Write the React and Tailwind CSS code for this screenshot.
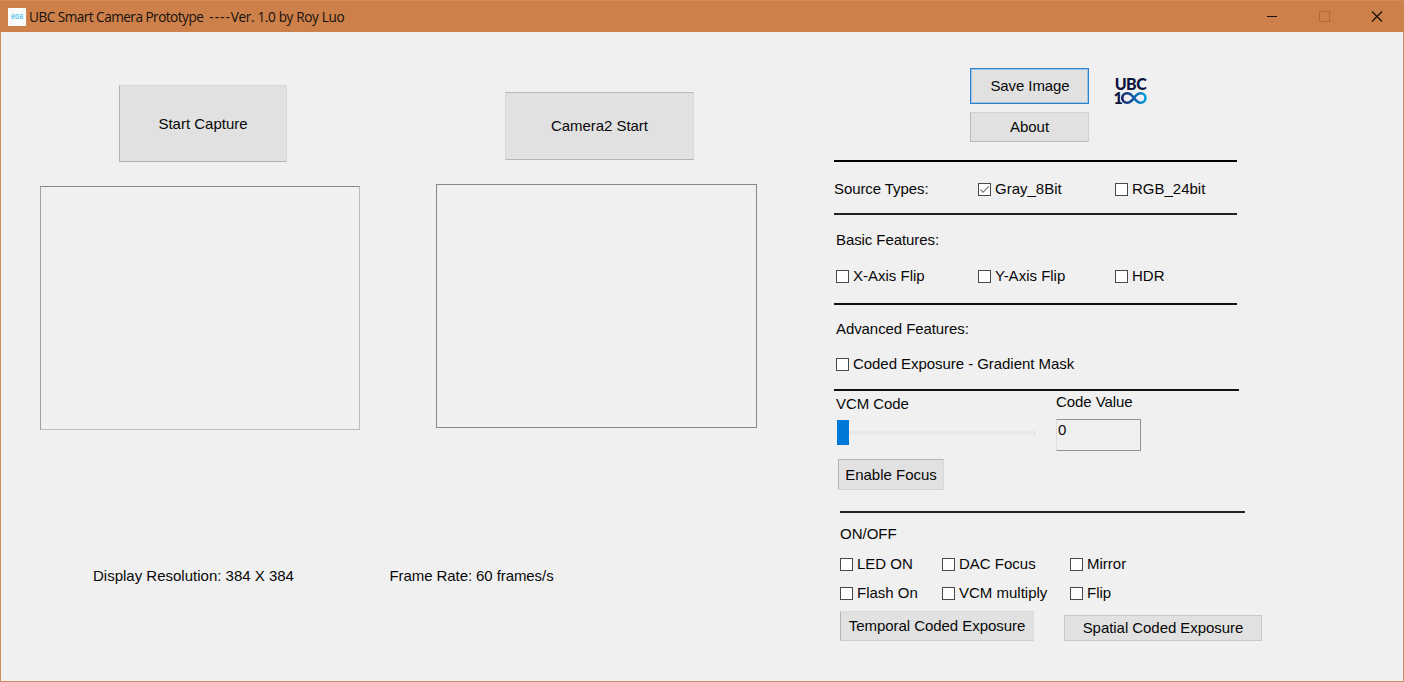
const Button = ({ className, children }) => (
  <button className={`flex shrink-0 items-center justify-center whitespace-nowrap border bg-[#e1e1e1] ${className}`}>{children}</button>
);

const Check = ({ label, checked }) => (
  <label className="flex h-[18px] items-center gap-1 whitespace-nowrap">
    <span className="flex size-[13px] shrink-0 items-center justify-center border border-[#4a4a4a] bg-white">
      {checked && (
        <svg width="11" height="11" viewBox="0 0 11 11" fill="none" stroke="#777" strokeWidth="1.1">
          <path d="M1.300 5.300 4.200 8.200 9.800 2.400" />
        </svg>
      )}
    </span>
    <span className="leading-[18px]">{label}</span>
  </label>
);

const Logo = () => (
  <svg className="overflow-visible" width="36" height="30" viewBox="0 0 36 30">
    <defs>
      <linearGradient id="inf" gradientUnits="userSpaceOnUse" x1="7" y1="0" x2="33" y2="0">
        <stop offset="0" stopColor="#1c1c5e" />
        <stop offset="0.5" stopColor="#0f5fae" />
        <stop offset="1" stopColor="#00a7e1" />
      </linearGradient>
    </defs>
    <text fontFamily="Lato" fontWeight="900" fontSize="16" fill="#0c1440">
      <tspan x="0.8" y="14" letterSpacing="-0.6">UBC</tspan>
      <tspan x="-0.6" y="28">1</tspan>
    </text>
    <path d="M20 22C17.500 25.500 15.800 26.700 13 26.700A4.700 4.700 0 0 1 13 17.300C15.800 17.300 17.500 18.500 20 22S24.200 26.700 26.800 26.700A4.700 4.700 0 0 0 26.800 17.300C24.200 17.300 22.500 18.500 20 22Z" fill="none" stroke="url(#inf)" strokeWidth="2.600" />
  </svg>
);

export default function App() {
  return (
    <div className="flex h-[682px] w-[1404px] flex-col overflow-hidden bg-[#f0f0f0] font-['Liberation_Sans',Arial,sans-serif] text-[15px] leading-[18px] text-[#080808]">
      <header className="flex h-8 shrink-0 items-center border-t border-[#d38a5b] bg-[#cd804a]">
        <svg className="ml-2 shrink-0" width="18" height="18" viewBox="0 0 18 18">
          <rect width="18" height="18" fill="#fbfcfc" />
          <path d="M1 1 5 5M17 1 13 5M1 17 5 13M17 17 13 13" stroke="#d8e6ec" strokeWidth=".7" />
          <text x="3" y="11.300" fontFamily="Inter" fontWeight="600" fontSize="7.500" textLength="12" lengthAdjust="spacingAndGlyphs" fill="#53c6ee">eoa</text>
        </svg>
        <h1 className="ml-[3px] mt-px whitespace-nowrap font-['Open_Sans',sans-serif] text-[13.6px] tracking-[-0.52px] text-[#15110e]">
          UBC Smart Camera Prototype&nbsp; <span className="tracking-[1px]">----</span><span className="tracking-[-0.36px]">Ver. 1.0 by Roy Luo</span>
        </h1>
        <div className="ml-auto mr-[21px] flex items-center gap-[41px]">
          <svg width="12" height="12" viewBox="0 0 12 12"><path d="M1 5.500H11" stroke="#15110e" /></svg>
          <svg width="11" height="11" viewBox="0 0 11 11"><rect x=".5" y=".5" width="10" height="10" fill="none" stroke="#ae693b" /></svg>
          <svg width="12" height="12" viewBox="0 0 12 12"><path d="M1 .5 11 10.500M11 .5 1 10.500" stroke="#15110e" strokeWidth="1.200" /></svg>
        </div>
      </header>
      <main className="flex flex-1 items-start border-x border-b border-[#d28b60]">
        <section className="ml-[39px] flex w-[320px] shrink-0 flex-col">
          <Button className="ml-[79px] mt-[53px] h-[77px] w-[168px] border-[#d6d6d6] border-b-[#b4b4b4] border-l-[#b4b4b4]">Start Capture</Button>
          <div className="mt-6 h-[244px] border border-[#bcbcbc] border-l-[#a0a0a0] border-t-[#888]" />
          <p className="ml-[53px] mt-[137px] whitespace-nowrap">Display Resolution: 384 X 384</p>
        </section>
        <section className="ml-[29.5px] flex w-[367.5px] shrink-0 flex-col">
          <Button className="ml-[115.5px] mt-[60px] h-[68px] w-[189px] border-[#d8d8d8] border-b-[#b4b4b4] border-t-[#bababa] tracking-[-0.05px]">Camera2 Start</Button>
          <div className="ml-[46.5px] mt-6 h-[244px] border border-[#888]" />
          <p className="mt-[139px] whitespace-nowrap tracking-[-0.08px]">Frame Rate: 60 frames/s</p>
        </section>
        <section className="ml-[77px] flex w-[430px] shrink-0 flex-col">
          <div className="ml-[136px] mt-9 flex">
            <div className="flex flex-col">
              <Button className="h-[36px] w-[119px] border-[#2b82cb] pl-px tracking-[-0.1px] shadow-[inset_0_0_0_1px_#9fc5e6]">Save Image</Button>
              <Button className="mt-2 h-[30px] w-[119px] border-[#d2d2d2] border-b-[#b8b8b8] border-l-[#b8b8b8]">About</Button>
            </div>
            <div className="ml-[25px] mt-[8px]"><Logo /></div>
          </div>
          <hr className="mt-[18px] h-[2px] w-[403px] border-0 bg-black" />
          <div className="mt-[18px] grid grid-cols-[144px_137px_120px]">
            <span className="tracking-[-0.08px]">Source Types:</span>
            <Check label="Gray_8Bit" checked />
            <Check label="RGB_24bit" />
          </div>
          <hr className="mt-[15px] h-[2px] w-[403px] border-0 bg-[#222]" />
          <p className="ml-[2px] mt-4 tracking-[-0.08px]">Basic Features:</p>
          <div className="ml-[2px] mt-[18px] grid grid-cols-[142px_137px_120px]">
            <Check label="X-Axis Flip" />
            <Check label="Y-Axis Flip" />
            <Check label="HDR" />
          </div>
          <hr className="mt-[18px] h-[2px] w-[403px] border-0 bg-[#111]" />
          <p className="ml-[2px] mt-[15px] tracking-[-0.08px]">Advanced Features:</p>
          <div className="ml-[2px] mt-[17px] tracking-[-0.05px]"><Check label="Coded Exposure - Gradient Mask" /></div>
          <hr className="mt-4 h-[2px] w-[405px] border-0 bg-[#111]" />
          <div className="ml-[2px] flex items-start">
            <div className="flex w-[220px] flex-col items-start">
              <p className="mt-1 tracking-[-0.08px]">VCM Code</p>
              <div className="ml-[1px] mt-[7px] flex items-center">
                <div className="h-[25px] w-3 bg-[#0078d7]" />
                <div className="h-1 w-[186px] border-r border-[#d6d6d6] bg-[#e7eaea]" />
              </div>
              <Button className="ml-[2px] mt-[14px] h-[31px] w-[106px] border-[#d6d6d6] border-l-[#b4b4b4] border-t-[#b4b4b4]">Enable Focus</Button>
            </div>
            <div className="flex flex-col">
              <p className="mt-[2px] tracking-[-0.08px]">Code Value</p>
              <div className="mt-2 h-8 w-[85px] border border-[#929292] border-l-[#dedede] pl-px pt-px">0</div>
            </div>
          </div>
          <hr className="ml-[6px] mt-[21px] h-[2px] w-[405px] border-0 bg-[#222]" />
          <p className="ml-[6px] mt-3">ON/OFF</p>
          <div className="ml-[6px] mt-3 grid grid-cols-[102px_128px_120px] gap-y-[11px]">
            <Check label="LED ON" />
            <Check label="DAC Focus" />
            <Check label="Mirror" />
            <Check label="Flash On" />
            <Check label="VCM multiply" />
            <Check label="Flip" />
          </div>
          <div className="ml-[6px] mt-[9px] flex items-start gap-[30px]">
            <Button className="h-[30px] w-[194px] border-[#dadada] border-b-[#cbcbcb] border-l-[#b4b4b4] tracking-[-0.05px]">Temporal Coded Exposure</Button>
            <Button className="mt-1 h-[26px] w-[198px] border-[#c8c8c8] tracking-[-0.05px]">Spatial Coded Exposure</Button>
          </div>
        </section>
      </main>
    </div>
  );
}
